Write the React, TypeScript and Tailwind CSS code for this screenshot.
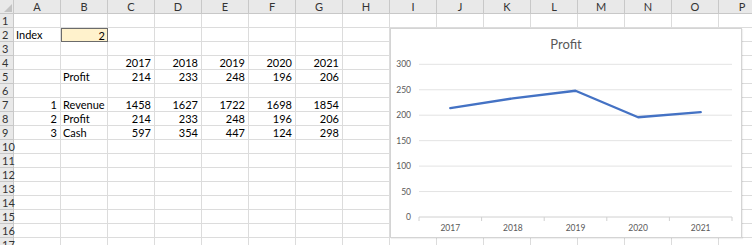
const COLS = ["A", "B", "C", "D", "E", "F", "G", "H", "I", "J", "K", "L", "M", "N", "O", "P"];
const ROWS = Array.from({ length: 17 }, (_, i) => i + 1);

type Cell = { v: string; left?: boolean };

const cells: Record<string, Cell> = {
  A2: { v: "Index", left: true },
  B2: { v: "2" },
  C4: { v: "2017" }, D4: { v: "2018" }, E4: { v: "2019" }, F4: { v: "2020" }, G4: { v: "2021" },
  B5: { v: "Profit", left: true },
  C5: { v: "214" }, D5: { v: "233" }, E5: { v: "248" }, F5: { v: "196" }, G5: { v: "206" },
  A7: { v: "1" }, B7: { v: "Revenue", left: true },
  C7: { v: "1458" }, D7: { v: "1627" }, E7: { v: "1722" }, F7: { v: "1698" }, G7: { v: "1854" },
  A8: { v: "2" }, B8: { v: "Profit", left: true },
  C8: { v: "214" }, D8: { v: "233" }, E8: { v: "248" }, F8: { v: "196" }, G8: { v: "206" },
  A9: { v: "3" }, B9: { v: "Cash", left: true },
  C9: { v: "597" }, D9: { v: "354" }, E9: { v: "447" }, F9: { v: "124" }, G9: { v: "298" },
};

const profit = [214, 233, 248, 196, 206];
const years = ["2017", "2018", "2019", "2020", "2021"];

function ProfitChart() {
  // plot area inside the chart box
  const x0 = 28, x1 = 341, y0 = 188, yTop = 35.3;
  const step = (x1 - x0) / 5;
  const yOf = (v: number) => y0 - (v / 300) * (y0 - yTop);
  const pts = profit.map((v, i) => `${x0 + step * (i + 0.5)},${yOf(v)}`).join(" ");

  return (
    <div className="absolute left-[390px] top-[28px] w-[352px] h-[210px] bg-white border border-[#d4d4d4] shadow-[1px_1px_1px_rgba(0,0,0,0.06)]">
      <div className="pt-[6px] text-center text-[13px] leading-[18px] text-[#595959]">Profit</div>
      <svg className="absolute left-0 top-0" width="352" height="210" viewBox="0 0 352 210">
        {[0, 50, 100, 150, 200, 250, 300].map((t) => (
          <g key={t}>
            <line x1={x0} x2={x1} y1={yOf(t)} y2={yOf(t)} stroke={t === 0 ? "#d0d0d0" : "#e3e3e3"} strokeWidth="1" />
            <text x="20" y={yOf(t) + 3} textAnchor="end" fontSize="8.5" fill="#595959" fontFamily="Lato, sans-serif">
              {t}
            </text>
          </g>
        ))}
        {[0, 1, 2, 3, 4, 5].map((i) => (
          <line key={i} x1={x0 + step * i} x2={x0 + step * i} y1={y0} y2={y0 + 4} stroke="#d0d0d0" strokeWidth="1" />
        ))}
        {years.map((y, i) => (
          <text key={y} x={x0 + step * (i + 0.5)} y="202" textAnchor="middle" fontSize="8.5" fill="#595959" fontFamily="Lato, sans-serif">
            {y}
          </text>
        ))}
        <polyline points={pts} fill="none" stroke="#4472c4" strokeWidth="2.4" strokeLinejoin="round" strokeLinecap="round" />
      </svg>
    </div>
  );
}

export default function App() {
  return (
    <div className="relative w-[752px] h-[245px] overflow-hidden bg-white font-['Lato','Liberation_Sans',sans-serif] text-[11px] text-black">
      <div className="grid grid-cols-[14px_repeat(16,47px)] grid-rows-[14px_repeat(17,14px)]">
        {/* corner */}
        <div className="relative bg-[#e9e9e9] border-r border-b border-[#c8c8c8]">
          <div className="absolute right-[1px] bottom-[1px] w-0 h-0 border-l-[8px] border-l-transparent border-b-[8px] border-b-[#c3c3c3]" />
        </div>
        {COLS.map((c) => (
          <div key={c} className="bg-[#e9e9e9] border-r border-b border-[#c8c8c8] flex items-center justify-center text-[11px] leading-none text-[#333]">
            {c}
          </div>
        ))}
        {ROWS.map((r) => (
          <Row key={r} r={r} />
        ))}
      </div>
      <ProfitChart />
    </div>
  );
}

function Row({ r }: { r: number }) {
  return (
    <>
      <div className="bg-[#e9e9e9] border-r border-b border-[#c8c8c8] flex items-center pl-[2px] text-[11px] leading-none text-[#333]">
        {r}
      </div>
      {COLS.map((c) => {
        const cell = cells[c + r];
        const sel = c + r === "B2";
        return (
          <div
            key={c}
            className={
              sel
                ? "relative bg-[#fff2cc] outline outline-1 outline-[#6b6b6b] -outline-offset-1 flex items-center justify-end pr-[3px] leading-none z-10"
                : `border-r border-b border-[#dcdcdc] flex items-center leading-none whitespace-nowrap ${cell?.left ? "justify-start pl-[2px]" : "justify-end pr-[3px]"}`
            }
          >
            {cell?.v}
          </div>
        );
      })}
    </>
  );
}
